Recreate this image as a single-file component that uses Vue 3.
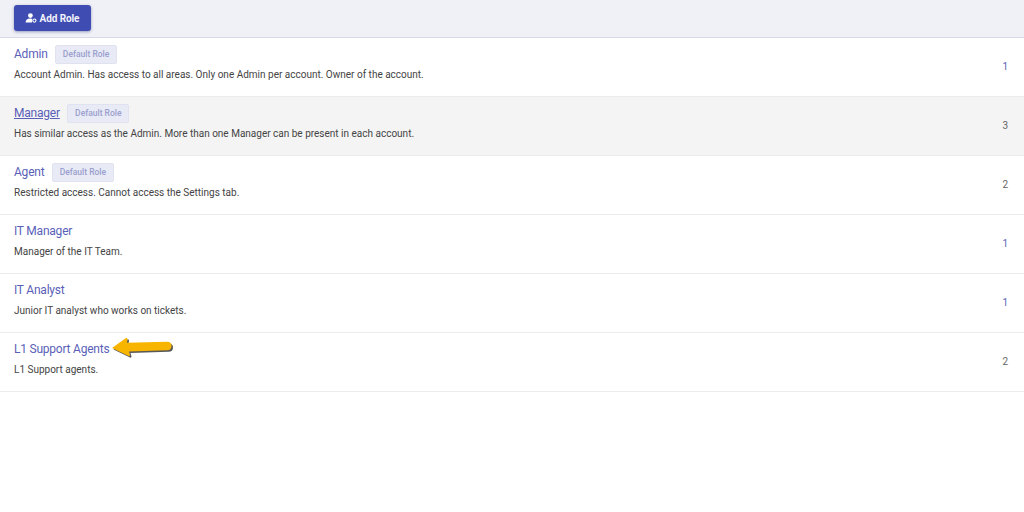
<script setup>
const roles = [
  { name: 'Admin', isDefault: true, desc: 'Account Admin. Has access to all areas. Only one Admin per account. Owner of the account.', count: 1 },
  { name: 'Manager', isDefault: true, desc: 'Has similar access as the Admin. More than one Manager can be present in each account.', count: 3, hover: true },
  { name: 'Agent', isDefault: true, desc: 'Restricted access. Cannot access the Settings tab.', count: 2 },
  { name: 'IT Manager', desc: 'Manager of the IT Team.', count: 1 },
  { name: 'IT Analyst', desc: 'Junior IT analyst who works on tickets.', count: 1 },
  { name: 'L1 Support Agents', desc: 'L1 Support agents.', count: 2, arrow: true },
]
const arrowPath = 'M2 12 L16 2 Q17.5 1.5 17.5 3 L17 6.8 L57 5.8 Q61.5 5.8 61.5 10 Q61.5 14.2 57 14.2 L19 15.4 L20 19 Q20 20.5 18.5 20 Z'
</script>

<template>
  <div class="page">
    <header class="toolbar">
      <button class="add">
        <svg class="add-icon" viewBox="0 0 12 10" width="12" height="10">
          <circle cx="5.4" cy="2.6" r="2.4" fill="#fff" />
          <path d="M0.6 9.6c0-2.6 1.9-4 4.4-4 .8 0 1.4.1 2 .4v3.6z" fill="#fff" />
          <circle cx="9.4" cy="7.6" r="1.6" fill="none" stroke="#fff" stroke-width="1.1" />
        </svg>
        Add Role
      </button>
    </header>
    <ul class="list">
      <li v-for="r in roles" :key="r.name" class="row" :class="{ hover: r.hover }">
        <div class="info">
          <div class="head">
            <a class="name">{{ r.name }}</a>
            <span v-if="r.isDefault" class="tag">Default Role</span>
            <svg v-if="r.arrow" class="arrow" viewBox="0 0 66 24" width="66" height="24">
              <path :d="arrowPath" fill="#2e2e2e" opacity=".8" transform="translate(1.5 1.6)" />
              <path :d="arrowPath" fill="#f7b500" />
            </svg>
          </div>
          <p class="desc">{{ r.desc }}</p>
        </div>
        <span class="count" :class="{ dark: r.count !== 1 }">{{ r.count }}</span>
      </li>
    </ul>
  </div>
</template>

<style>
html, body { margin: 0; background: #fff; }
</style>

<style scoped>
.page {
  width: 1024px;
  height: 512px;
  overflow: hidden;
  background: #fff;
  font-family: Roboto, "Liberation Sans", sans-serif;
}
.toolbar {
  height: 37px;
  background: #f0f1f6;
  border-bottom: 1px solid #d8d9e6;
  padding-left: 14px;
  display: flex;
  align-items: flex-start;
}
.add {
  margin-top: 5px;
  width: 77px;
  height: 26px;
  border: 0;
  border-radius: 3px;
  background: #3f4db3;
  box-shadow: 0 1px 3px rgba(40, 50, 120, .45);
  color: #f2f3fb;
  font: 700 10px Roboto, "Liberation Sans", sans-serif;
  letter-spacing: -0.1px;
  display: flex;
  align-items: center;
  justify-content: center;
  gap: 3px;
  padding: 0 1px 0 0;
}
.add-icon { display: block; }
.list { list-style: none; margin: 0; padding: 0; }
.row {
  height: 58px;
  border-bottom: 1px solid #ececec;
  display: flex;
  justify-content: space-between;
  padding: 0 16px 0 14px;
}
.row.hover { background: #f4f4f4; }
.info { padding-top: 6px; }
.head {
  display: flex;
  align-items: center;
  height: 20px;
  position: relative;
}
.name {
  color: #5a5fb8;
  font-size: 12px;
  letter-spacing: -0.22px;
  line-height: 20px;
}
.hover .name { text-decoration: underline; }
.tag {
  margin-left: 7.5px;
  height: 19px;
  width: 62px;
  display: flex;
  align-items: center;
  justify-content: center;
  border-radius: 2px;
  background: #e8eaf5;
  border: 1px solid #e0e2f0;
  box-sizing: border-box;
  color: #9a9fce;
  font-size: 8.5px;
  font-weight: 500;
}
.arrow {
  position: absolute;
  left: 96px;
  top: -3px;
}
.desc {
  margin: 4px 0 0;
  color: #444;
  font-size: 10px;
  line-height: 14px;
}
.count {
  color: #5a5fb8;
  font-size: 10px;
  line-height: 14px;
  margin-top: 22px;
}
.count.dark { color: #666; }
</style>
